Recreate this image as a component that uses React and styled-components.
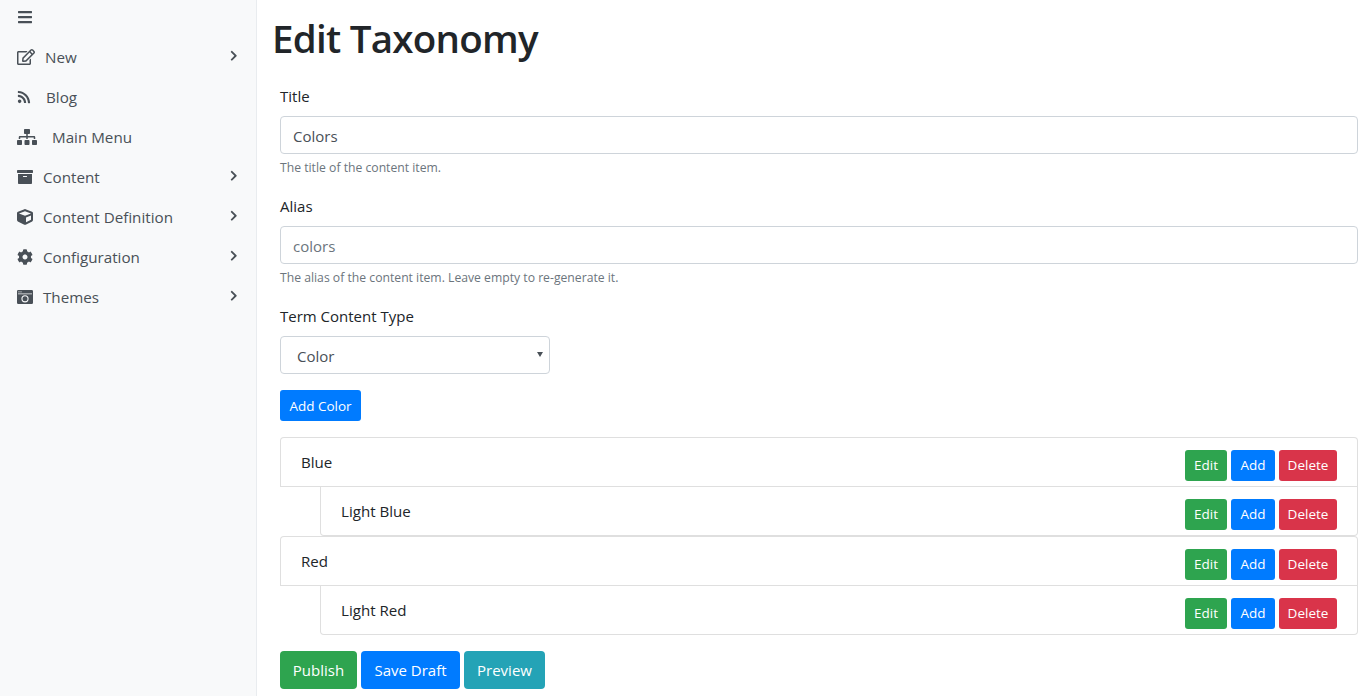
import React from "react";
import styled, { createGlobalStyle } from "styled-components";
import { FaBars, FaRegEdit, FaRss, FaSitemap, FaArchive, FaCube, FaCog, FaChevronRight } from "react-icons/fa";

const Global = createGlobalStyle`
  html, body { margin: 0; padding: 0; height: 100%; overflow: hidden; background: #fff; }
  body { font-family: "Open Sans", "Segoe UI", sans-serif; font-size: 16px; line-height: 1.5; color: #212529; }
  * { box-sizing: border-box; }
`;
const Page = styled.div`display: flex; height: 696px; width: 1370px; overflow: hidden;`;
const Sidebar = styled.nav`width: 257px; flex: none; background: #f8f9fa; border-right: 1px solid #e9ecef; color: #495057;`;
const Toggle = styled.div`height: 37px; padding: 9px 17px 0; font-size: 16px; color: #495057; svg { display: block; }`;
const NavItem = styled.div`
  height: 40px; display: flex; align-items: center; padding: 0 16px 0 17px; font-size: 15.2px; gap: ${p => p.$gap}px;
  svg.ico { flex: none; font-size: ${p => p.$size}px; color: #495057; }
  span { flex: 1; }
`;
const Chevron = styled(FaChevronRight)`font-size: 11.5px; color: #495057; margin-top: -3px; margin-right: 1px;`;
const Main = styled.main`flex: 1; padding: 0 12px 0 16px; min-width: 0;`;
const Title = styled.h1`margin: 8px 0 0 -1px; font-size: 38.5px; font-weight: 600; letter-spacing: -0.75px; line-height: 60px; height: 60px; color: #212529;`;
const Form = styled.div`padding-left: 7px; margin-top: 17px;`;
const Field = styled.div`margin-bottom: ${p => p.$mb || 18}px;`;
const Label = styled.label`display: block; font-size: 15px; line-height: 22px; margin-bottom: 9px; color: #212529;`;
const Input = styled.input`display: block; width: 100%; height: 38px; border: 1px solid #ced4da; border-radius: 4px; padding: 1px 12px 0; font: 15px "Open Sans", sans-serif; color: ${p => p.$muted ? "#6c757d" : "#495057"}; background: #fff;`;
const Help = styled.small`display: block; font-size: 12.2px; line-height: 18px; margin-top: 5px; color: #6c757d;`;
const Select = styled.div`position: relative; width: 270px; height: 38px; border: 1px solid #ced4da; border-radius: 4px; padding: 0 16px; font-size: 15px; line-height: 38px; color: #495057; &::after { content: ""; position: absolute; right: 6px; top: 15px; border-left: 3px solid transparent; border-right: 3px solid transparent; border-top: 5px solid #495057; }`;
const colors = { green: "#2ea44f", blue: "#007bff", red: "#d9344a", teal: "#24a3b6" };
const Btn = styled.button`font-family: "Open Sans", sans-serif; border: 1px solid transparent; color: #fff; border-radius: ${p => p.$lg ? 4 : 3}px; background: ${p => colors[p.$c]}; font-size: ${p => p.$lg ? 15 : 13.5}px; height: ${p => p.$lg ? 38 : 31}px; width: ${p => p.$w ? `${p.$w}px` : "auto"}; padding: ${p => p.$lg ? "1px 0 0" : "2px 0 0"}; line-height: 1;`;
const List = styled.div`margin-top: 16px;`;
const Row = styled.div`height: 50px; margin-top: ${p => p.$first ? 0 : -1}px; margin-left: ${p => p.$child ? 40 : 0}px; border: 1px solid rgba(0,0,0,.125); border-radius: ${p => p.$radius}; display: flex; align-items: center; justify-content: space-between; padding: 0 20px; font-size: 15.1px; background: #fff; position: relative;`;
const Actions = styled.div`display: flex; gap: 4px; position: relative; top: 3px;`;
const Footer = styled.div`display: flex; gap: 4px; margin-top: 16px;`;

function ThemeIcon(props) {
  return (
    <svg viewBox="0 0 16 16" width="1em" height="1em" fill="currentColor" {...props}>
      <path fillRule="evenodd" d="M1.3 1h13.4A1.3 1.3 0 0 1 16 2.3v11.4a1.3 1.3 0 0 1-1.3 1.3H1.3A1.3 1.3 0 0 1 0 13.7V2.3A1.3 1.3 0 0 1 1.3 1zM1 4.4v.9h14v-.9zM2 2.2a.6.6 0 1 0 0 1.2.6.6 0 0 0 0-1.2zm2 0a.6.6 0 1 0 0 1.2.6.6 0 0 0 0-1.2zm4 4a3.6 3.6 0 1 0 0 7.2 3.6 3.6 0 0 0 0-7.2zm0 1.1a2.5 2.5 0 1 1 0 5 2.5 2.5 0 0 1 0-5z" />
      <path d="M8.9 8.2l.8.5-1.4 2.3-.8-.5z" />
    </svg>
  );
}

const nav = [
  { t: "New", I: FaRegEdit, c: 1, gap: 10, size: 18 },
  { t: "Blog", I: FaRss, gap: 15, size: 14 },
  { t: "Main Menu", I: FaSitemap, gap: 15, size: 20 },
  { t: "Content", I: FaArchive, c: 1, gap: 10, size: 16 },
  { t: "Content Definition", I: FaCube, c: 1, gap: 10, size: 16 },
  { t: "Configuration", I: FaCog, c: 1, gap: 10, size: 16 },
  { t: "Themes", I: ThemeIcon, c: 1, gap: 10, size: 16 },
];

const TermRow = ({ name, child, first, radius }) => (
  <Row $child={child} $first={first} $radius={radius}>
    <div>{name}</div>
    <Actions>
      <Btn $c="green" $w={42}>Edit</Btn>
      <Btn $c="blue" $w={44}>Add</Btn>
      <Btn $c="red" $w={58}>Delete</Btn>
    </Actions>
  </Row>
);

export default function App() {
  return (
    <Page>
      <Global />
      <Sidebar>
        <Toggle><FaBars /></Toggle>
        {nav.map(({ t, I, c, gap, size }) => (
          <NavItem key={t} $gap={gap} $size={size}>
            <I className="ico" />
            <span>{t}</span>
            {c ? <Chevron /> : null}
          </NavItem>
        ))}
      </Sidebar>
      <Main>
        <Title>Edit Taxonomy</Title>
        <Form>
          <Field>
            <Label>Title</Label>
            <Input defaultValue="Colors" />
            <Help>The title of the content item.</Help>
          </Field>
          <Field>
            <Label>Alias</Label>
            <Input $muted defaultValue="colors" />
            <Help>The alias of the content item. Leave empty to re-generate it.</Help>
          </Field>
          <Field $mb={16}>
            <Label>Term Content Type</Label>
            <Select>Color</Select>
          </Field>
          <Btn $c="blue" $w={81}>Add Color</Btn>
          <List>
            <TermRow first name="Blue" radius="4px 4px 0 0" />
            <TermRow child name="Light Blue" radius="0 0 4px 4px" />
            <TermRow first name="Red" radius="4px 4px 0 0" />
            <TermRow child name="Light Red" radius="0 0 4px 4px" />
          </List>
          <Footer>
            <Btn $lg $c="green" $w={77}>Publish</Btn>
            <Btn $lg $c="blue" $w={99}>Save Draft</Btn>
            <Btn $lg $c="teal" $w={81}>Preview</Btn>
          </Footer>
        </Form>
      </Main>
    </Page>
  );
}
